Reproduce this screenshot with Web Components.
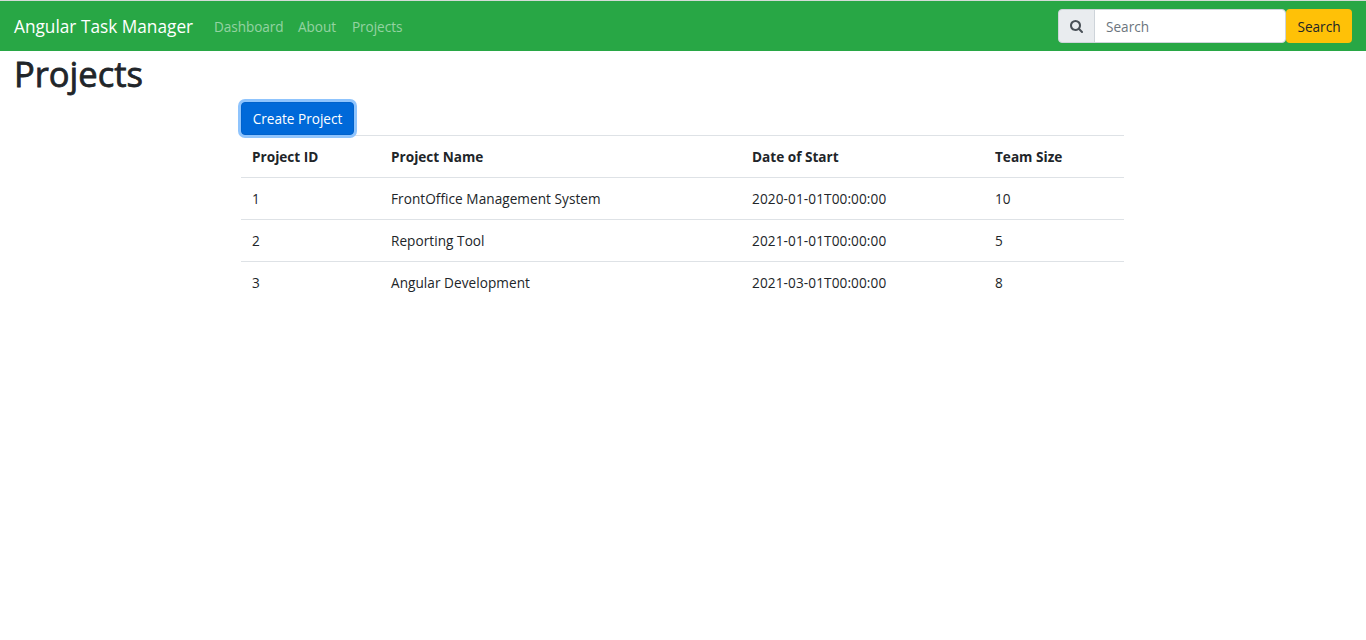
<!DOCTYPE html>
<html lang="en">
<head>
<meta charset="utf-8">
<title>Angular Task Manager</title>
<style>
body{margin:0;background:#fff;color:#212529;font:13.6px/22px "Open Sans","Noto Sans",sans-serif}
</style>
</head>
<body>
<task-app></task-app>
<script>
const define=(name,html,setup)=>customElements.define(name,class extends HTMLElement{
  connectedCallback(){
    if(this.shadowRoot)return;
    const t=document.createElement('template');
    t.innerHTML=html;
    this.attachShadow({mode:'open'}).append(t.content.cloneNode(true));
    if(setup)setup(this,this.shadowRoot);
  }
});

define('nav-link',`<style>
:host{display:block;color:rgba(255,255,255,.5);white-space:nowrap;width:var(--w)}
span{letter-spacing:-.06px}
</style><span><slot></slot></span>`);

define('search-box',`<style>
:host{display:flex;height:34px;margin-top:-1px}
.icon{box-sizing:border-box;width:37px;background:#e9ecef;border:1px solid #ced4da;border-radius:4px 0 0 4px;display:flex;align-items:center;justify-content:center}
svg{width:13px;height:13px;display:block;margin:1px 1px 0 0}
input{box-sizing:border-box;width:192px;margin:0 0 0 -1px;padding:1px 11px 0;border:1px solid #ced4da;border-radius:0 4px 4px 0;background:#fff;font:inherit;color:#495057;outline:none}
input::placeholder{color:#6c757d;opacity:1}
button{box-sizing:border-box;width:66px;border:0;padding:2px 0 0;border-radius:4px;background:#ffc107;color:#212529;font:inherit}
</style>
<div class="icon"><svg viewBox="0 0 1664 1664"><path fill="#495057" d="M1152 704q0-185-131.500-316.500T704 256 387.500 387.500 256 704t131.500 316.500T704 1152t316.500-131.500T1152 704zm512 832q0 52-38 90t-90 38q-54 0-90-38l-343-342q-179 124-399 124-143 0-273.500-55.500t-225-150-150-225T0 704t55.500-273.500 150-225 225-150T704 0t273.500 55.500 225 150 150 225T1408 704q0 220-124 399l343 343q37 37 37 90z"/></svg></div>
<input type="text" placeholder="Search"><button>Search</button>`);

define('nav-bar',`<style>
:host{display:flex;align-items:center;box-sizing:border-box;height:51px;border-top:1px solid #d5dbd7;background:#28a745;padding:1px 14px 0}
.brand{color:#fff;font-size:17.25px;line-height:27px;width:200px;white-space:nowrap}
nav{display:flex;flex:1;padding-top:1px}
</style>
<div class="brand"><slot name="brand"></slot></div><nav><slot></slot></nav><search-box></search-box>`);

define('primary-button',`<style>
:host{display:block}
button{display:block;box-sizing:border-box;width:113px;height:33px;padding:1px 0 0;border:1px solid #0062cc;border-radius:4px;background:#0069d9;color:#fff;font:inherit;outline:none;box-shadow:0 0 0 3px #8fc4fd;position:relative}
</style><button><slot></slot></button>`);

define('project-table',`<style>
:host{display:block}
table{width:883px;border-collapse:separate;border-spacing:0;table-layout:fixed}
th,td{box-sizing:border-box;height:42px;border-top:1px solid #dee2e6;padding:1px 11px 0;text-align:left;vertical-align:middle;white-space:nowrap}
th{font-weight:700}
td{letter-spacing:.05px}
td:nth-child(3){letter-spacing:.11px}
</style>
<table><colgroup><col style="width:139px"><col style="width:361px"><col style="width:243px"><col></colgroup>
<thead><tr></tr></thead><tbody></tbody></table>`,(el,root)=>{
  root.querySelector('thead tr').innerHTML=['Project ID','Project Name','Date of Start','Team Size'].map(t=>`<th><span>${t}</span></th>`).join('');
  root.querySelector('tbody').innerHTML=[
    [1,'FrontOffice Management System','2020-01-01T00:00:00',10],
    [2,'Reporting Tool','2021-01-01T00:00:00',5],
    [3,'Angular Development','2021-03-01T00:00:00',8]
  ].map(r=>`<tr>${r.map(c=>`<td><span>${c}</span></td>`).join('')}</tr>`).join('');
});

define('task-app',`<style>
:host{display:block}
h1{margin:0 0 0 14px;font-size:34.5px;font-weight:400;-webkit-text-stroke:.8px #212529;line-height:43px;padding-top:1px;height:50px}
main{margin-left:241px;width:883px}
</style>
<nav-bar><span slot="brand">Angular Task Manager</span>
<nav-link style="--w:84px">Dashboard</nav-link><nav-link style="--w:54px">About</nav-link><nav-link>Projects</nav-link></nav-bar>
<h1>Projects</h1>
<main><primary-button>Create Project</primary-button><project-table></project-table></main>`);
</script>
</body>
</html>
